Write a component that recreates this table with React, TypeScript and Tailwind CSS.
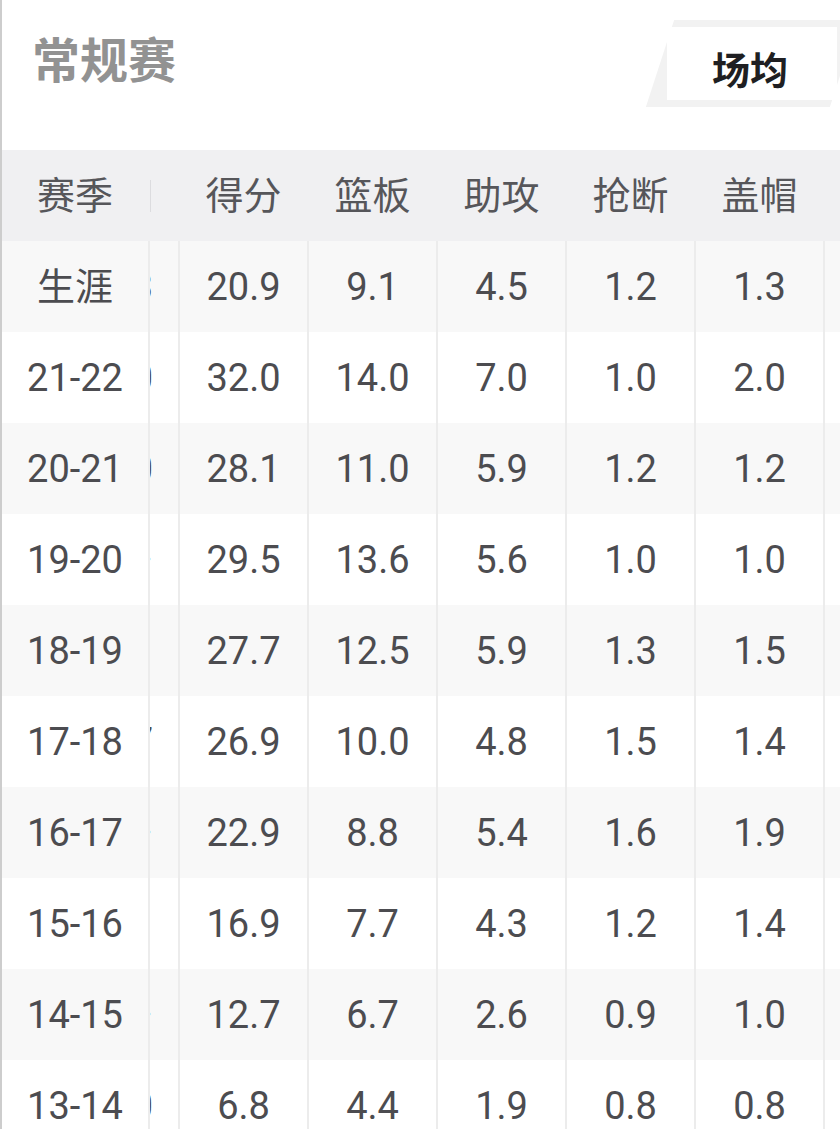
import React from "react";

const rows: { s: string; peek: string; v: string[] }[] = [
  { s: "生涯", peek: "3", v: ["20.9", "9.1", "4.5", "1.2", "1.3"] },
  { s: "21-22", peek: "0", v: ["32.0", "14.0", "7.0", "1.0", "2.0"] },
  { s: "20-21", peek: "0", v: ["28.1", "11.0", "5.9", "1.2", "1.2"] },
  { s: "19-20", peek: "·", v: ["29.5", "13.6", "5.6", "1.0", "1.0"] },
  { s: "18-19", peek: "1", v: ["27.7", "12.5", "5.9", "1.3", "1.5"] },
  { s: "17-18", peek: "7", v: ["26.9", "10.0", "4.8", "1.5", "1.4"] },
  { s: "16-17", peek: "·", v: ["22.9", "8.8", "5.4", "1.6", "1.9"] },
  { s: "15-16", peek: "", v: ["16.9", "7.7", "4.3", "1.2", "1.4"] },
  { s: "14-15", peek: "·", v: ["12.7", "6.7", "2.6", "0.9", "1.0"] },
  { s: "13-14", peek: "0", v: ["6.8", "4.4", "1.9", "0.8", "0.8"] },
];

const heads = ["得分", "篮板", "助攻", "抢断", "盖帽"];

const font = { fontFamily: "Roboto, 'Noto Sans CJK SC', sans-serif" };

export default function App() {
  return (
    <div
      className="w-[840px] h-[1129px] overflow-hidden bg-white border-l-2 border-[#cdcdcd]"
      style={font}
    >
      {/* top bar */}
      <div className="h-[150px] flex justify-between items-start">
        <div
          className="pl-[30px] pt-[33px] text-[48px] leading-none font-bold text-[#929292]"
          style={{ fontFamily: "'Noto Sans CJK SC', sans-serif" }}
        >
          常规赛
        </div>
        <div className="mt-[20px] -mr-[4px] w-[184px] h-[87px] -skew-x-[18deg] bg-[#f2f2f2] p-[7px]">
          <div className="w-full h-full bg-white skew-x-[18deg] flex items-center justify-center pt-[8px] pr-[4px]">
            <span
              className="text-[38px] leading-none font-bold text-[#1f1f22]"
              style={{ fontFamily: "'Noto Sans CJK SC', sans-serif" }}
            >
              场均
            </span>
          </div>
        </div>
      </div>

      {/* header row */}
      <div className="h-[91px] flex bg-[#f0f0f2] text-[38px] leading-none text-[#56565a]">
        <div className="w-[146px] flex items-center justify-center">赛季</div>
        <div className="w-[30px] flex items-center">
          <div className="ml-[2px] w-px h-[32px] bg-[#dcdcdf]" />
        </div>
        {heads.map((h) => (
          <div key={h} className="w-[129px] pl-[2px] flex items-center justify-center">
            {h}
          </div>
        ))}
        <div className="flex-1" />
      </div>

      {/* data rows */}
      {rows.map((r, i) => (
        <div
          key={r.s}
          className={`h-[91px] flex text-[38px] leading-none text-[#4c4c50] ${
            i % 2 === 0 ? "bg-[#f8f8f8]" : "bg-white"
          }`}
        >
          <div className="w-[148px] border-r-2 border-[#ececec] flex items-center justify-center">
            {r.s}
          </div>
          <div className="w-[28px] overflow-hidden flex items-center justify-end">
            <span className="mr-[25px] shrink-0 whitespace-nowrap">{r.peek}</span>
          </div>
          {r.v.map((v, j) => (
            <div
              key={j}
              className="w-[129px] border-l-2 border-[#ececec] flex items-center justify-center"
            >
              {v}
            </div>
          ))}
          <div className="flex-1 border-l-2 border-[#ececec]" />
        </div>
      ))}
    </div>
  );
}
